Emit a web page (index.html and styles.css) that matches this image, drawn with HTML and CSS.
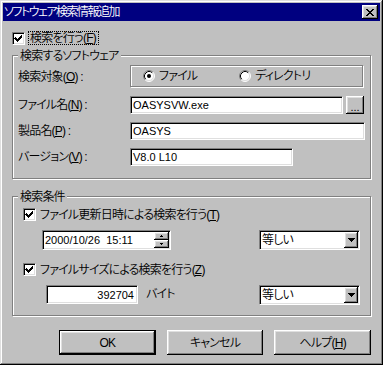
FILE: index.html
```html
<!DOCTYPE html>
<html lang="ja">
<head>
<meta charset="utf-8">
<title>ソフトウェア検索情報追加</title>
<link rel="stylesheet" href="styles.css">
</head>
<body>
<div class="window">
  <div class="titlebar">
    <span class="title">ソフトウェア検索情報追加</span>
    <span class="close"><svg width="8" height="7" viewBox="0 0 8 7" shape-rendering="crispEdges"><path d="M0 0h2v1h-2zM6 0h2v1h-2zM1 1h2v1h-2zM5 1h2v1h-2zM2 2h4v1h-4zM3 3h2v1h-2zM2 4h4v1h-4zM1 5h2v1h-2zM5 5h2v1h-2zM0 6h2v1h-2zM6 6h2v1h-2z" fill="#000"/></svg></span>
  </div>
  <div class="content">
    <div class="main-check">
      <span class="cb"><svg width="13" height="13" viewBox="0 0 13 13" shape-rendering="crispEdges"><path d="M3 5h1v1h1v1h1v-1h1v-1h1v-1h1v-1h1v3h-1v1h-1v1h-1v1h-1v1h-1v-1h-1v-1h-1v-1h-1z" fill="#000"/></svg></span>
      <span class="focus-label">検索を行う(<u>F</u>)</span>
    </div>

    <div class="group g1">
      <div class="legend">検索するソフトウェア</div>
      <div class="form-grid">
        <span class="lbl">検索対象(<u>O</u>) :</span>
        <div class="radio-frame">
          <span class="radio-item">
            <svg class="radio" width="12" height="12" viewBox="0 0 12 12"><circle cx="6" cy="6" r="5" fill="#fff"/><path d="M2.11 9.89A5.5 5.5 0 0 1 9.89 2.11" stroke="#808080" fill="none"/><path d="M9.89 2.11A5.5 5.5 0 0 1 2.11 9.89" stroke="#fff" fill="none"/><path d="M2.82 9.18A4.5 4.5 0 0 1 9.18 2.82" stroke="#000" fill="none"/><path d="M9.18 2.82A4.5 4.5 0 0 1 2.82 9.18" stroke="#dfdfdf" fill="none"/><circle cx="6" cy="6" r="2" fill="#000"/></svg>
            <span class="rtext">ファイル</span>
          </span>
          <span class="radio-item">
            <svg class="radio" width="12" height="12" viewBox="0 0 12 12"><circle cx="6" cy="6" r="5" fill="#fff"/><path d="M2.11 9.89A5.5 5.5 0 0 1 9.89 2.11" stroke="#808080" fill="none"/><path d="M9.89 2.11A5.5 5.5 0 0 1 2.11 9.89" stroke="#fff" fill="none"/><path d="M2.82 9.18A4.5 4.5 0 0 1 9.18 2.82" stroke="#000" fill="none"/><path d="M9.18 2.82A4.5 4.5 0 0 1 2.82 9.18" stroke="#dfdfdf" fill="none"/></svg>
            <span class="rtext">ディレクトリ</span>
          </span>
        </div>

        <span class="lbl">ファイル名(<u>N</u>) :</span>
        <div class="field-row">
          <div class="field w-file">OASYSVW.exe</div>
          <div class="btn small-btn">...</div>
        </div>

        <span class="lbl">製品名(<u>P</u>) :</span>
        <div class="field w-product">OASYS</div>

        <span class="lbl">バージョン(<u>V</u>) :</span>
        <div class="field w-version">V8.0 L10</div>
      </div>
    </div>

    <div class="group g2">
      <div class="legend">検索条件</div>
      <div class="check-row">
        <span class="cb"><svg width="13" height="13" viewBox="0 0 13 13" shape-rendering="crispEdges"><path d="M3 5h1v1h1v1h1v-1h1v-1h1v-1h1v-1h1v3h-1v1h-1v1h-1v1h-1v1h-1v-1h-1v-1h-1v-1h-1z" fill="#000"/></svg></span>
        <span class="cb-label">ファイル更新日時による検索を行う(<u>T</u>)</span>
      </div>
      <div class="ctrl-row date-row">
        <div class="datebox">
          <span class="date-text">2000/10/26&nbsp;&nbsp;15:11</span>
          <span class="spinner">
            <span class="spin-btn"><svg width="3" height="2" viewBox="0 0 3 2" shape-rendering="crispEdges"><path d="M1 0h1v1h1v1h-3v-1h1z" fill="#000"/></svg></span>
            <span class="spin-btn"><svg width="3" height="2" viewBox="0 0 3 2" shape-rendering="crispEdges"><path d="M0 0h3v1h-1v1h-1v-1h-1z" fill="#000"/></svg></span>
          </span>
        </div>
        <div class="combo">
          <span class="combo-text">等しい</span>
          <span class="dd-btn"><svg width="7" height="4" viewBox="0 0 7 4" shape-rendering="crispEdges"><path d="M0 0h7v1h-1v1h-1v1h-1v1h-1v-1h-1v-1h-1v-1h-1z" fill="#000"/></svg></span>
        </div>
      </div>
      <div class="check-row second">
        <span class="cb"><svg width="13" height="13" viewBox="0 0 13 13" shape-rendering="crispEdges"><path d="M3 5h1v1h1v1h1v-1h1v-1h1v-1h1v-1h1v3h-1v1h-1v1h-1v1h-1v1h-1v-1h-1v-1h-1v-1h-1z" fill="#000"/></svg></span>
        <span class="cb-label">ファイルサイズによる検索を行う(<u>Z</u>)</span>
      </div>
      <div class="ctrl-row size-row">
        <div class="field size-field">392704</div>
        <span class="unit">バイト</span>
        <div class="combo">
          <span class="combo-text">等しい</span>
          <span class="dd-btn"><svg width="7" height="4" viewBox="0 0 7 4" shape-rendering="crispEdges"><path d="M0 0h7v1h-1v1h-1v1h-1v1h-1v-1h-1v-1h-1v-1h-1z" fill="#000"/></svg></span>
        </div>
      </div>
    </div>

    <div class="button-row">
      <div class="btn push default">OK</div>
      <div class="btn push">キャンセル</div>
      <div class="btn push">ヘルプ(<u>H</u>)</div>
    </div>
  </div>
</div>
</body>
</html>
```

FILE: styles.css
```css
* { box-sizing: border-box; }
html, body { margin: 0; padding: 0; }
body {
  background: #c0c0c0;
  font-family: "Liberation Sans", "Noto Sans CJK JP", sans-serif;
  font-size: 12px;
  font-weight: 350;
  line-height: 14px;
  letter-spacing: -0.8px;
  font-feature-settings: "palt" 1;
  color: #000;
}
u { text-decoration: underline; text-underline-offset: 1px; }

.window {
  width: 383px;
  height: 365px;
  padding: 3px;
  background: #c0c0c0;
  box-shadow: inset -1px -1px #000, inset 1px 1px #dfdfdf, inset -2px -2px #808080, inset 2px 2px #fff;
}

.titlebar {
  height: 18px;
  background: #000080;
  color: #fff;
  display: flex;
  align-items: center;
  justify-content: space-between;
  padding: 0 2px 0 1px;
}
.title { font-size: 12px; line-height: 18px; letter-spacing: -1.5px; }
.close {
  width: 16px;
  height: 14px;
  background: #c0c0c0;
  display: flex;
  align-items: center;
  justify-content: center;
  box-shadow: inset -1px -1px #000, inset 1px 1px #fff, inset -2px -2px #808080, inset 2px 2px #dfdfdf;
}
.close svg { display: block; margin-left: -1px; }

.content { padding: 0 9px; }

.main-check {
  margin-top: 10px;
  height: 14px;
  display: flex;
  align-items: center;
}
.cb {
  width: 13px;
  height: 13px;
  flex: none;
  background: #fff;
  border: 1px solid;
  border-color: #808080 #fff #fff #808080;
  box-shadow: inset 1px 1px #000, inset -1px -1px #dfdfdf;
}
.cb svg { display: block; margin: -1px 0 0 -1px; }
.focus-label {
  margin-left: 3px;
  height: 14px;
  padding: 0 2px 0 1px;
  border: 1px dotted #000;
  line-height: 12px;
  white-space: nowrap;
}

.group {
  width: 359px;
  border: 1px solid #808080;
  box-shadow: inset 1px 1px #fff, 1px 1px #fff;
}
.g1 { margin-top: 10px; height: 124px; }
.g2 { margin-top: 17px; height: 120px; }
.legend {
  margin: -7px 0 0 5px;
  padding: 0 2px;
  width: fit-content;
  height: 14px;
  line-height: 14px;
  background: #c0c0c0;
  white-space: nowrap;
}

.form-grid {
  margin-top: 3px;
  padding-left: 5px;
  display: grid;
  grid-template-columns: 112px auto;
  grid-template-rows: 22px 18px 18px 18px;
  row-gap: 8px;
  align-items: center;
}
.form-grid > .radio-frame { margin-bottom: 2px; }
.lbl { white-space: nowrap; }

.radio-frame {
  width: 233px;
  height: 22px;
  border: 1px solid #808080;
  box-shadow: inset 1px 1px #fff, 1px 1px #fff;
  display: grid;
  grid-template-columns: 96px auto;
  align-items: center;
  padding-left: 12px;
}
.radio-item { display: flex; align-items: center; white-space: nowrap; }
.radio { display: block; flex: none; }
.rtext { margin-left: 4px; }

.field {
  height: 18px;
  background: #fff;
  border: 1px solid;
  border-color: #808080 #fff #fff #808080;
  box-shadow: inset 1px 1px #000, inset -1px -1px #dfdfdf;
  padding: 1px 2px 0 2px;
  font-size: 11px;
  font-weight: 400;
  letter-spacing: 0;
  line-height: 14px;
  white-space: nowrap;
}
.field-row { display: flex; align-items: center; }
.w-file { width: 213px; }
.w-product { width: 235px; }
.w-version { width: 163px; }

.btn {
  background: #c0c0c0;
  box-shadow: inset -1px -1px #000, inset 1px 1px #fff, inset -2px -2px #808080, inset 2px 2px #dfdfdf;
  display: flex;
  align-items: center;
  justify-content: center;
  white-space: nowrap;
}
.small-btn {
  margin-left: 3px;
  width: 18px;
  height: 18px;
  font-size: 11px;
  letter-spacing: 0;
  line-height: 10px;
  padding-bottom: 2px;
  align-items: flex-end;
}

.check-row {
  margin: 4px 0 0 10px;
  height: 13px;
  display: flex;
  align-items: center;
}
.check-row.second { margin-top: 13px; }
.cb-label { margin-left: 4px; white-space: nowrap; }

.ctrl-row {
  margin-top: 9px;
  height: 20px;
  display: flex;
  align-items: flex-start;
  padding-right: 10px;
}
.date-row { padding-left: 29px; }
.size-row { padding-left: 33px; }

.datebox {
  width: 129px;
  height: 20px;
  background: #fff;
  border: 1px solid;
  border-color: #808080 #fff #fff #808080;
  box-shadow: inset 1px 1px #000, inset -1px -1px #dfdfdf;
  padding: 1px 1px 1px 2px;
  display: flex;
  align-items: center;
  font-size: 11px;
  font-weight: 400;
  letter-spacing: 0;
}
.date-text { flex: 1; white-space: nowrap; }
.spinner { width: 15px; height: 16px; display: flex; flex-direction: column; }
.spin-btn {
  height: 8px;
  background: #c0c0c0;
  box-shadow: inset -1px -1px #000, inset 1px 1px #fff, inset -2px -2px #808080, inset 2px 2px #dfdfdf;
  display: flex;
  align-items: center;
  justify-content: center;
}
.spin-btn svg { display: block; }

.combo {
  margin-left: auto;
  width: 101px;
  height: 20px;
  background: #fff;
  border: 1px solid;
  border-color: #808080 #fff #fff #808080;
  box-shadow: inset 1px 1px #000, inset -1px -1px #dfdfdf;
  padding: 1px;
  display: flex;
  align-items: center;
}
.combo-text { flex: 1; padding-left: 1px; white-space: nowrap; }
.dd-btn {
  width: 14px;
  height: 16px;
  background: #c0c0c0;
  box-shadow: inset -1px -1px #000, inset 1px 1px #fff, inset -2px -2px #808080, inset 2px 2px #dfdfdf;
  display: flex;
  align-items: center;
  justify-content: center;
}
.dd-btn svg { display: block; }

.size-field {
  width: 92px;
  height: 19px;
  text-align: right;
  padding: 2px 3px 0 2px;
}
.unit { margin-left: 8px; line-height: 19px; white-space: nowrap; }

.button-row {
  margin: 14px 0 0 47px;
  display: flex;
  gap: 11px;
}
.push {
  width: 97px;
  height: 25px;
  font-size: 12px;
}
.push.default {
  border: 1px solid #000;
}
```
